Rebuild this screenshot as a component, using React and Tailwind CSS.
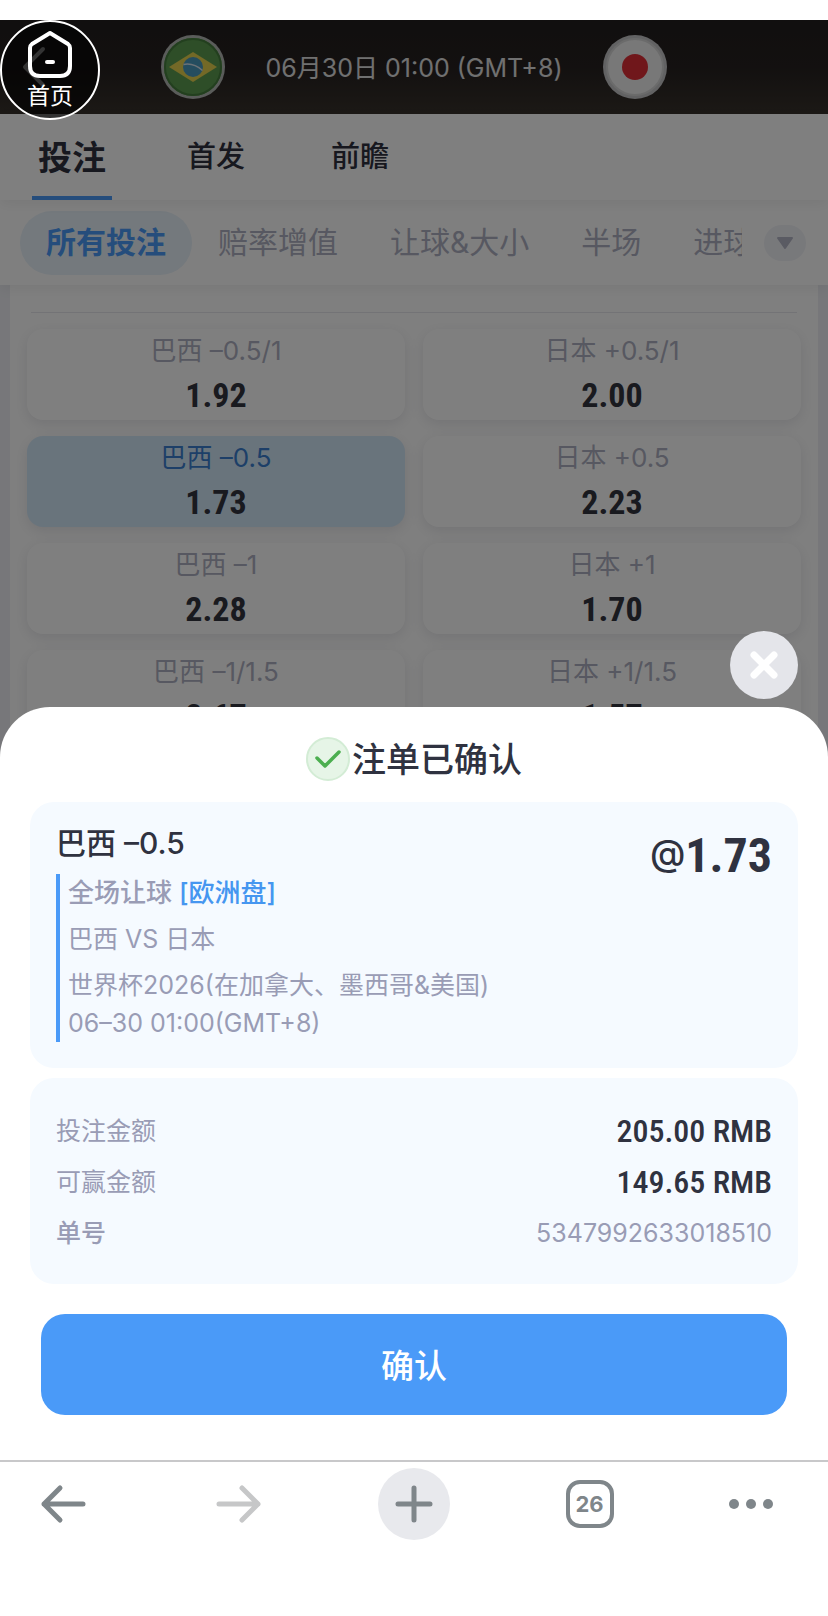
import { useState } from 'react';

const tabs = ['投注', '首发', '前瞻'];
const filters = ['所有投注', '赔率增值', '让球&大小', '半场', '进球'];

const markets = [
  { label: '巴西 –0.5/1', odds: '1.92' },
  { label: '日本 +0.5/1', odds: '2.00' },
  { label: '巴西 –0.5', odds: '1.73' },
  { label: '日本 +0.5', odds: '2.23' },
  { label: '巴西 –1', odds: '2.28' },
  { label: '日本 +1', odds: '1.70' },
  { label: '巴西 –1/1.5', odds: '2.67' },
  { label: '日本 +1/1.5', odds: '1.57' },
];

const amounts = [
  { label: '投注金额', value: '205.00 RMB' },
  { label: '可赢金额', value: '149.65 RMB' },
];

const BrazilFlag = () => (
  <svg viewBox="0 0 64 64" className="size-16" aria-hidden="true">
    <circle cx="32" cy="32" r="32" fill="#b4b8b4" />
    <circle cx="32" cy="32" r="29" fill="#5c9c50" />
    <circle cx="32" cy="32" r="28" fill="none" stroke="#467f3e" strokeWidth="2" />
    <path d="M8 32 32 17l24 15-24 15Z" fill="#e6d24e" />
    <circle cx="32" cy="32" r="10" fill="#4a9abf" />
    <path d="M22.500 29.500q10-2 19 6" fill="none" stroke="#d8e4ec" strokeWidth="1.500" />
  </svg>
);

const JapanFlag = () => (
  <svg viewBox="0 0 64 64" className="size-16" aria-hidden="true">
    <circle cx="32" cy="32" r="32" fill="#c4c4c6" />
    <circle cx="32" cy="32" r="28" fill="#f0f0f0" />
    <circle cx="32" cy="32" r="28" fill="none" stroke="#d6d6d6" strokeWidth="2" />
    <circle cx="32" cy="32" r="13" fill="#e02e36" />
  </svg>
);

const MatchHeader = () => (
  <header className="relative flex h-[94px] items-center justify-center gap-10 bg-linear-to-b from-[#221e1e] via-[#262120] to-[#38322c] text-[25px] text-[#e0e0e0]">
    <button type="button" aria-label="返回" className="absolute left-5">
      <svg viewBox="0 0 28 44" className="h-11 w-7" fill="none" stroke="#fff" strokeWidth="4" strokeLinecap="round" strokeLinejoin="round">
        <path d="M23 4 5 22l18 18" />
      </svg>
    </button>
    <BrazilFlag />
    <time className="pt-1">06月30日 01:00 (GMT+8)</time>
    <JapanFlag />
  </header>
);

const MarketCard = ({ label, odds, selected, onSelect }) => (
  <button
    type="button"
    onClick={onSelect}
    className={`flex h-[91px] flex-col items-center rounded-2xl shadow-[0_4px_14px_rgba(60,60,80,0.12)] ${
      selected ? 'bg-[#d3e8f9]' : 'bg-white'
    }`}
  >
    <span className={`mt-1 text-[26px] leading-9 ${selected ? 'text-[#3a7fd0]' : 'text-[#aeb0c2]'}`}>{label}</span>
    <span className="mt-1.5 font-['Roboto_Condensed'] text-[34px] leading-10 font-bold text-[#33343f]">{odds}</span>
  </button>
);

const CloseIcon = () => (
  <svg viewBox="0 0 28 28" className="size-7" fill="none" stroke="#fff" strokeWidth="7" strokeLinecap="round" aria-hidden="true">
    <path d="m4 4 20 20M24 4 4 24" />
  </svg>
);

const Toolbar = () => (
  <nav className="flex h-[156px] items-start justify-between border-t-2 border-[#c8c8ca] bg-white px-[27px] pt-1.5 text-[#7f868a]">
    <button type="button" aria-label="后退" className="flex size-[72px] items-center justify-center">
      <svg viewBox="0 0 46 40" className="h-10 w-[46px]" fill="none" stroke="currentColor" strokeWidth="5" strokeLinecap="round" strokeLinejoin="round">
        <path d="M43 20H4M20 4 4 20l16 16" />
      </svg>
    </button>
    <button type="button" aria-label="前进" className="flex size-[72px] items-center justify-center text-[#c6c7c8]">
      <svg viewBox="0 0 46 40" className="h-10 w-[46px]" fill="none" stroke="currentColor" strokeWidth="5" strokeLinecap="round" strokeLinejoin="round">
        <path d="M3 20h39M26 4l16 16-16 16" />
      </svg>
    </button>
    <button type="button" aria-label="新标签页" className="flex size-[72px] items-center justify-center rounded-full bg-[#e8e9ed]">
      <svg viewBox="0 0 38 38" className="size-[38px]" fill="none" stroke="currentColor" strokeWidth="5" strokeLinecap="round">
        <path d="M19 3v32M3 19h32" />
      </svg>
    </button>
    <button type="button" className="flex size-[72px] items-center justify-center">
      <span className="flex size-12 items-center justify-center rounded-[14px] border-4 border-current text-[22px] font-bold">26</span>
    </button>
    <button type="button" aria-label="更多" className="flex size-[72px] items-center">
      <svg viewBox="0 0 48 12" className="h-3 w-12" fill="currentColor">
        <circle cx="5" cy="6" r="5" />
        <circle cx="22" cy="6" r="5" />
        <circle cx="39" cy="6" r="5" />
      </svg>
    </button>
  </nav>
);

const App = () => {
  const [activeTab, setActiveTab] = useState('投注');
  const [activeFilter, setActiveFilter] = useState('所有投注');
  const [selected, setSelected] = useState('巴西 –0.5');
  const [isSheetOpen, setIsSheetOpen] = useState(true);

  return (
    <div className="flex min-h-screen flex-col bg-white pt-5 font-['Inter','Noto_Sans_CJK_SC',sans-serif]">
      <main className="relative flex flex-1 flex-col overflow-hidden bg-[#eeeff4]">
        <MatchHeader />

        {/* Tabs */}
        <div className="z-20 flex h-[86px] gap-16 bg-white px-8 shadow-[0_4px_12px_rgba(0,0,0,0.06)]">
          {tabs.map((tab) => (
            <button
              key={tab}
              type="button"
              onClick={() => setActiveTab(tab)}
              className={`flex w-20 items-center justify-center border-b-4 pt-1 text-[#2f313f] ${
                tab === activeTab
                  ? 'border-[#4a9af8] text-[34px] font-bold'
                  : 'border-transparent text-[29px] font-medium'
              }`}
            >
              {tab}
            </button>
          ))}
        </div>

        {/* Market filters */}
        <div className="z-10 flex h-[85px] items-center bg-white pr-[22px] pl-5 shadow-[0_4px_12px_rgba(0,0,0,0.06)]">
          <div className="flex flex-1 overflow-hidden whitespace-nowrap">
            {filters.map((filter) => (
              <button
                key={filter}
                type="button"
                onClick={() => setActiveFilter(filter)}
                className={`h-16 shrink-0 rounded-full px-[26px] text-[30px] ${
                  filter === activeFilter ? 'bg-[#e8f2fa] font-bold text-[#4a9af8]' : 'text-[#aeb0c2]'
                }`}
              >
                {filter}
              </button>
            ))}
          </div>
          <button type="button" aria-label="展开" className="ml-[22px] flex h-9 w-[42px] items-center justify-center rounded-full bg-[#f1f2f7]">
            <svg viewBox="0 0 18 14" className="h-3.5 w-[18px]" fill="#b4b6c6" stroke="#b4b6c6" strokeWidth="2" strokeLinejoin="round">
              <path d="M2 2h14L9 12Z" />
            </svg>
          </button>
        </div>

        <div className="mx-2.5 flex-1 bg-white px-[17px] pt-[27px]">
          <div className="mx-1 border-t border-[#e6e6ec]" />
          <div className="mt-4 grid grid-cols-2 gap-x-[18px] gap-y-4">
            {markets.map(({ label, odds }) => (
              <MarketCard
                key={label}
                label={label}
                odds={odds}
                selected={label === selected}
                onSelect={() => setSelected(label)}
              />
            ))}
          </div>
        </div>

        {isSheetOpen && (
          <>
            <div className="absolute inset-0 z-30 bg-black/50" />
            <section role="dialog" aria-labelledby="sheet-title" className="absolute inset-x-0 bottom-0 z-40">
              <button
                type="button"
                aria-label="关闭"
                onClick={() => setIsSheetOpen(false)}
                className="mr-[30px] mb-2 ml-auto flex size-[68px] items-center justify-center rounded-full bg-[#e4e5ea]"
              >
                <CloseIcon />
              </button>

              <div className="rounded-t-[50px] bg-white px-[30px] pt-[26px] pb-[45px] text-[#2f3240]">
                <h2 id="sheet-title" className="flex h-[52px] items-center justify-center gap-0.5 text-[34px] font-medium">
                  <svg viewBox="0 0 44 44" className="size-11" fill="none" aria-hidden="true">
                    <circle cx="22" cy="22" r="21" fill="#e6f5e7" stroke="#d3ecd5" strokeWidth="2" />
                    <path d="m11 21 8 8 14-14" stroke="#4caf50" strokeWidth="3.500" strokeLinecap="round" strokeLinejoin="round" />
                  </svg>
                  注单已确认
                </h2>

                {/* Bet details */}
                <div className="mt-[17px] flex h-[266px] justify-between rounded-3xl bg-[#f5faff] px-[26px] pt-5">
                  <div>
                    <h3 className="text-[30px] leading-[42px] font-medium">巴西 –0.5</h3>
                    <div className="mt-2.5 flex h-[168px] flex-col border-l-4 border-[#4a9af8] pl-2 text-[25px] leading-[38px] text-[#999cb5]">
                      <p className="text-[26px] font-medium">
                        全场让球 <span className="text-[#4596f0]">[欧洲盘]</span>
                      </p>
                      <p className="mt-2">巴西 VS 日本</p>
                      <p className="mt-2">世界杯2026(在加拿大、墨西哥&美国)</p>
                      <p>06–30 01:00(GMT+8)</p>
                    </div>
                  </div>
                  <p className="mt-2 flex h-[52px] items-center font-['Roboto_Condensed'] text-[48px] font-bold">
                    <span className="pb-1.5 font-['Inter'] text-[36px] leading-[44px] font-medium">@</span>1.73
                  </p>
                </div>

                {/* Amounts */}
                <dl className="mt-2.5 flex h-[206px] flex-col rounded-3xl bg-[#f5faff] px-[26px] pt-7 text-[25px] leading-[51px] text-[#999cb5]">
                  {amounts.map(({ label, value }) => (
                    <div key={label} className="flex justify-between">
                      <dt>{label}</dt>
                      <dd className="font-['Roboto_Condensed'] text-[32px] font-medium text-[#2f3240]">{value}</dd>
                    </div>
                  ))}
                  <div className="flex justify-between">
                    <dt className="font-medium">单号</dt>
                    <dd>5347992633018510</dd>
                  </div>
                </dl>

                <div className="mt-[30px] flex px-[11px]">
                  <button
                    type="button"
                    onClick={() => setIsSheetOpen(false)}
                    className="h-[101px] flex-1 rounded-3xl bg-[#4a9af8] pt-1 text-[33px] font-medium text-white"
                  >
                    确认
                  </button>
                </div>
              </div>
            </section>
          </>
        )}

        {/* Floating home button */}
        <a
          href="#home"
          className="absolute top-0 left-0 z-50 flex size-[100px] flex-col items-center rounded-full border-2 border-white bg-black/60 pt-2 text-[23px] leading-9 text-white"
        >
          <svg viewBox="0 0 48 48" className="size-12" fill="none" stroke="currentColor" strokeWidth="4" strokeLinecap="round" strokeLinejoin="round" aria-hidden="true">
            <path d="M24 3 6 14Q4 15.500 4 18v18q0 10 10 10h20q10 0 10-10V18q0-2.500-2-4Z" />
            <path d="M21 32h6" />
          </svg>
          首页
        </a>
      </main>
      <Toolbar />
    </div>
  );
};

export default App;
